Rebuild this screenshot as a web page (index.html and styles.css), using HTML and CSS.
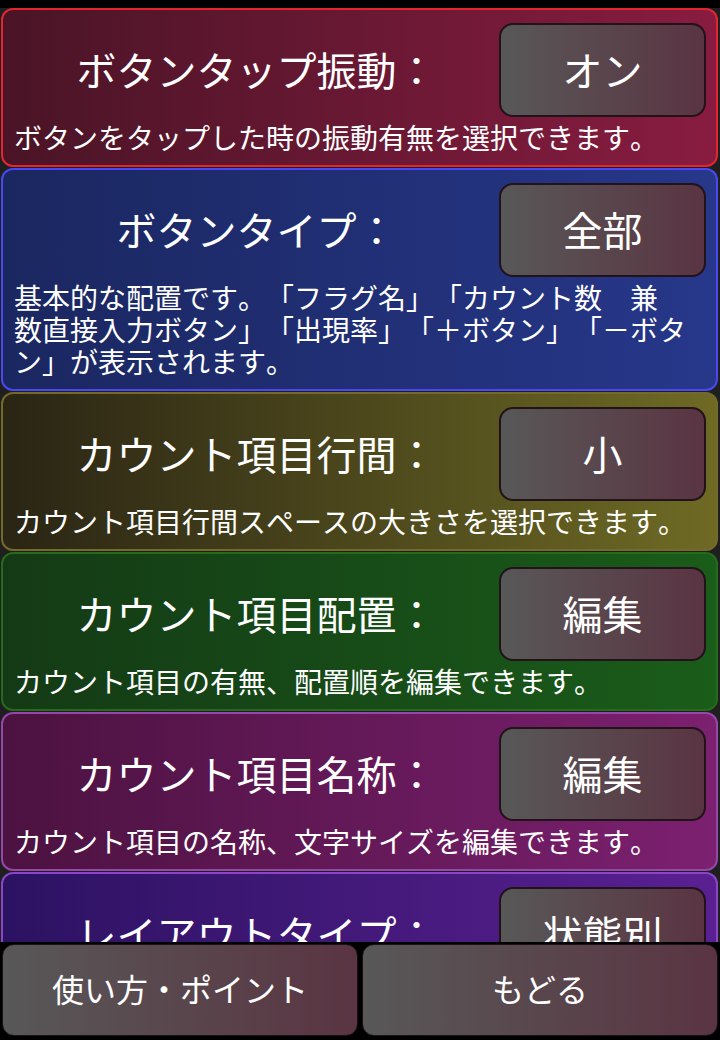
FILE: index.html
```html
<!DOCTYPE html>
<html lang="ja">
<head>
<meta charset="utf-8">
<title>設定</title>
<link rel="stylesheet" href="styles.css">
</head>
<body>
<div class="screen">
  <div class="statusbar"></div>
  <div class="list">
    <section class="card c-red">
      <div class="row">
        <div class="title">ボタンタップ振動：</div>
        <div class="btn">オン</div>
      </div>
      <p class="desc">ボタンをタップした時の振動有無を選択できます。</p>
    </section>
    <section class="card c-blue">
      <div class="row">
        <div class="title">ボタンタイプ：</div>
        <div class="btn">全部</div>
      </div>
      <p class="desc">基本的な配置です。「フラグ名」「カウント数　兼<br>数直接入力ボタン」「出現率」「＋ボタン」「－ボタ<br>ン」が表示されます。</p>
    </section>
    <section class="card c-olive">
      <div class="row">
        <div class="title">カウント項目行間：</div>
        <div class="btn">小</div>
      </div>
      <p class="desc">カウント項目行間スペースの大きさを選択できます。</p>
    </section>
    <section class="card c-green">
      <div class="row">
        <div class="title">カウント項目配置：</div>
        <div class="btn">編集</div>
      </div>
      <p class="desc">カウント項目の有無、配置順を編集できます。</p>
    </section>
    <section class="card c-magenta">
      <div class="row">
        <div class="title">カウント項目名称：</div>
        <div class="btn">編集</div>
      </div>
      <p class="desc">カウント項目の名称、文字サイズを編集できます。</p>
    </section>
    <section class="card c-purple">
      <div class="row">
        <div class="title">レイアウトタイプ：</div>
        <div class="btn">状態別</div>
      </div>
      <p class="desc">レイアウトのタイプを選択できます。</p>
    </section>
  </div>
  <div class="footer">
    <div class="fbtn">使い方・ポイント</div>
    <div class="fbtn">もどる</div>
  </div>
</div>
</body>
</html>
```
FILE: styles.css
```css
* { box-sizing: border-box; }
html, body {
  margin: 0;
  padding: 0;
  background: #000;
}
body {
  font-family: "Noto Sans CJK JP", "Noto Sans", sans-serif;
  color: #fff;
  text-spacing-trim: space-all;
  font-kerning: none;
}
.screen {
  width: 720px;
  height: 1040px;
  display: flex;
  flex-direction: column;
  overflow: hidden;
}
.statusbar {
  height: 8px;
  flex: none;
  background: #000;
}
.list {
  flex: 1;
  min-height: 0;
  overflow: hidden;
  background: #1f1f1f;
}
.card {
  margin: 0 2px 1px 1px;
  border: 2px solid #e02028;
  border-radius: 12px;
  padding: 13px 10px 12px 11px;
}
.row {
  display: flex;
  align-items: center;
  height: 94px;
}
.title {
  flex: 1;
  text-align: center;
  font-size: 40px;
  line-height: 48px;
  white-space: nowrap;
  padding-bottom: 3px;
}
.btn {
  flex: none;
  width: 207px;
  height: 94px;
  border: 2px solid #22121a;
  border-radius: 14px;
  background: linear-gradient(to right, #585858, #5a3442);
  display: flex;
  align-items: center;
  justify-content: center;
  font-size: 40px;
  padding-bottom: 3px;
}
.desc {
  margin: 4px 0 0;
  font-size: 28px;
  line-height: 32px;
  white-space: nowrap;
}
.c-red {
  border-color: #e4242e;
  background: linear-gradient(to right, #4a1426, #881c40);
}
.c-blue {
  border-color: #4a48f2;
  background: linear-gradient(to right, #1a2760, #27378a);
}
.c-olive {
  border-color: #756a2a;
  background: linear-gradient(to right, #2a2514, #6e6a24);
}
.c-green {
  border-color: #266a1c;
  background: linear-gradient(to right, #143a15, #1a5c1a);
}
.c-magenta {
  border-color: #9646ac;
  background: linear-gradient(to right, #4c1240, #7c2070);
}
.c-purple {
  border-color: #8a46c6;
  background: linear-gradient(to right, #2c1262, #5a2092);
}
.footer {
  flex: none;
  height: 98px;
  background: #000;
  display: flex;
  gap: 4px;
  padding: 2px 2px 4px;
}
.fbtn {
  flex: 1;
  border-radius: 12px;
  border: 1px solid #1a1214;
  background: linear-gradient(to right, #585858, #5a3442);
  display: flex;
  align-items: center;
  justify-content: center;
  font-size: 32px;
  padding-bottom: 4px;
}
```
